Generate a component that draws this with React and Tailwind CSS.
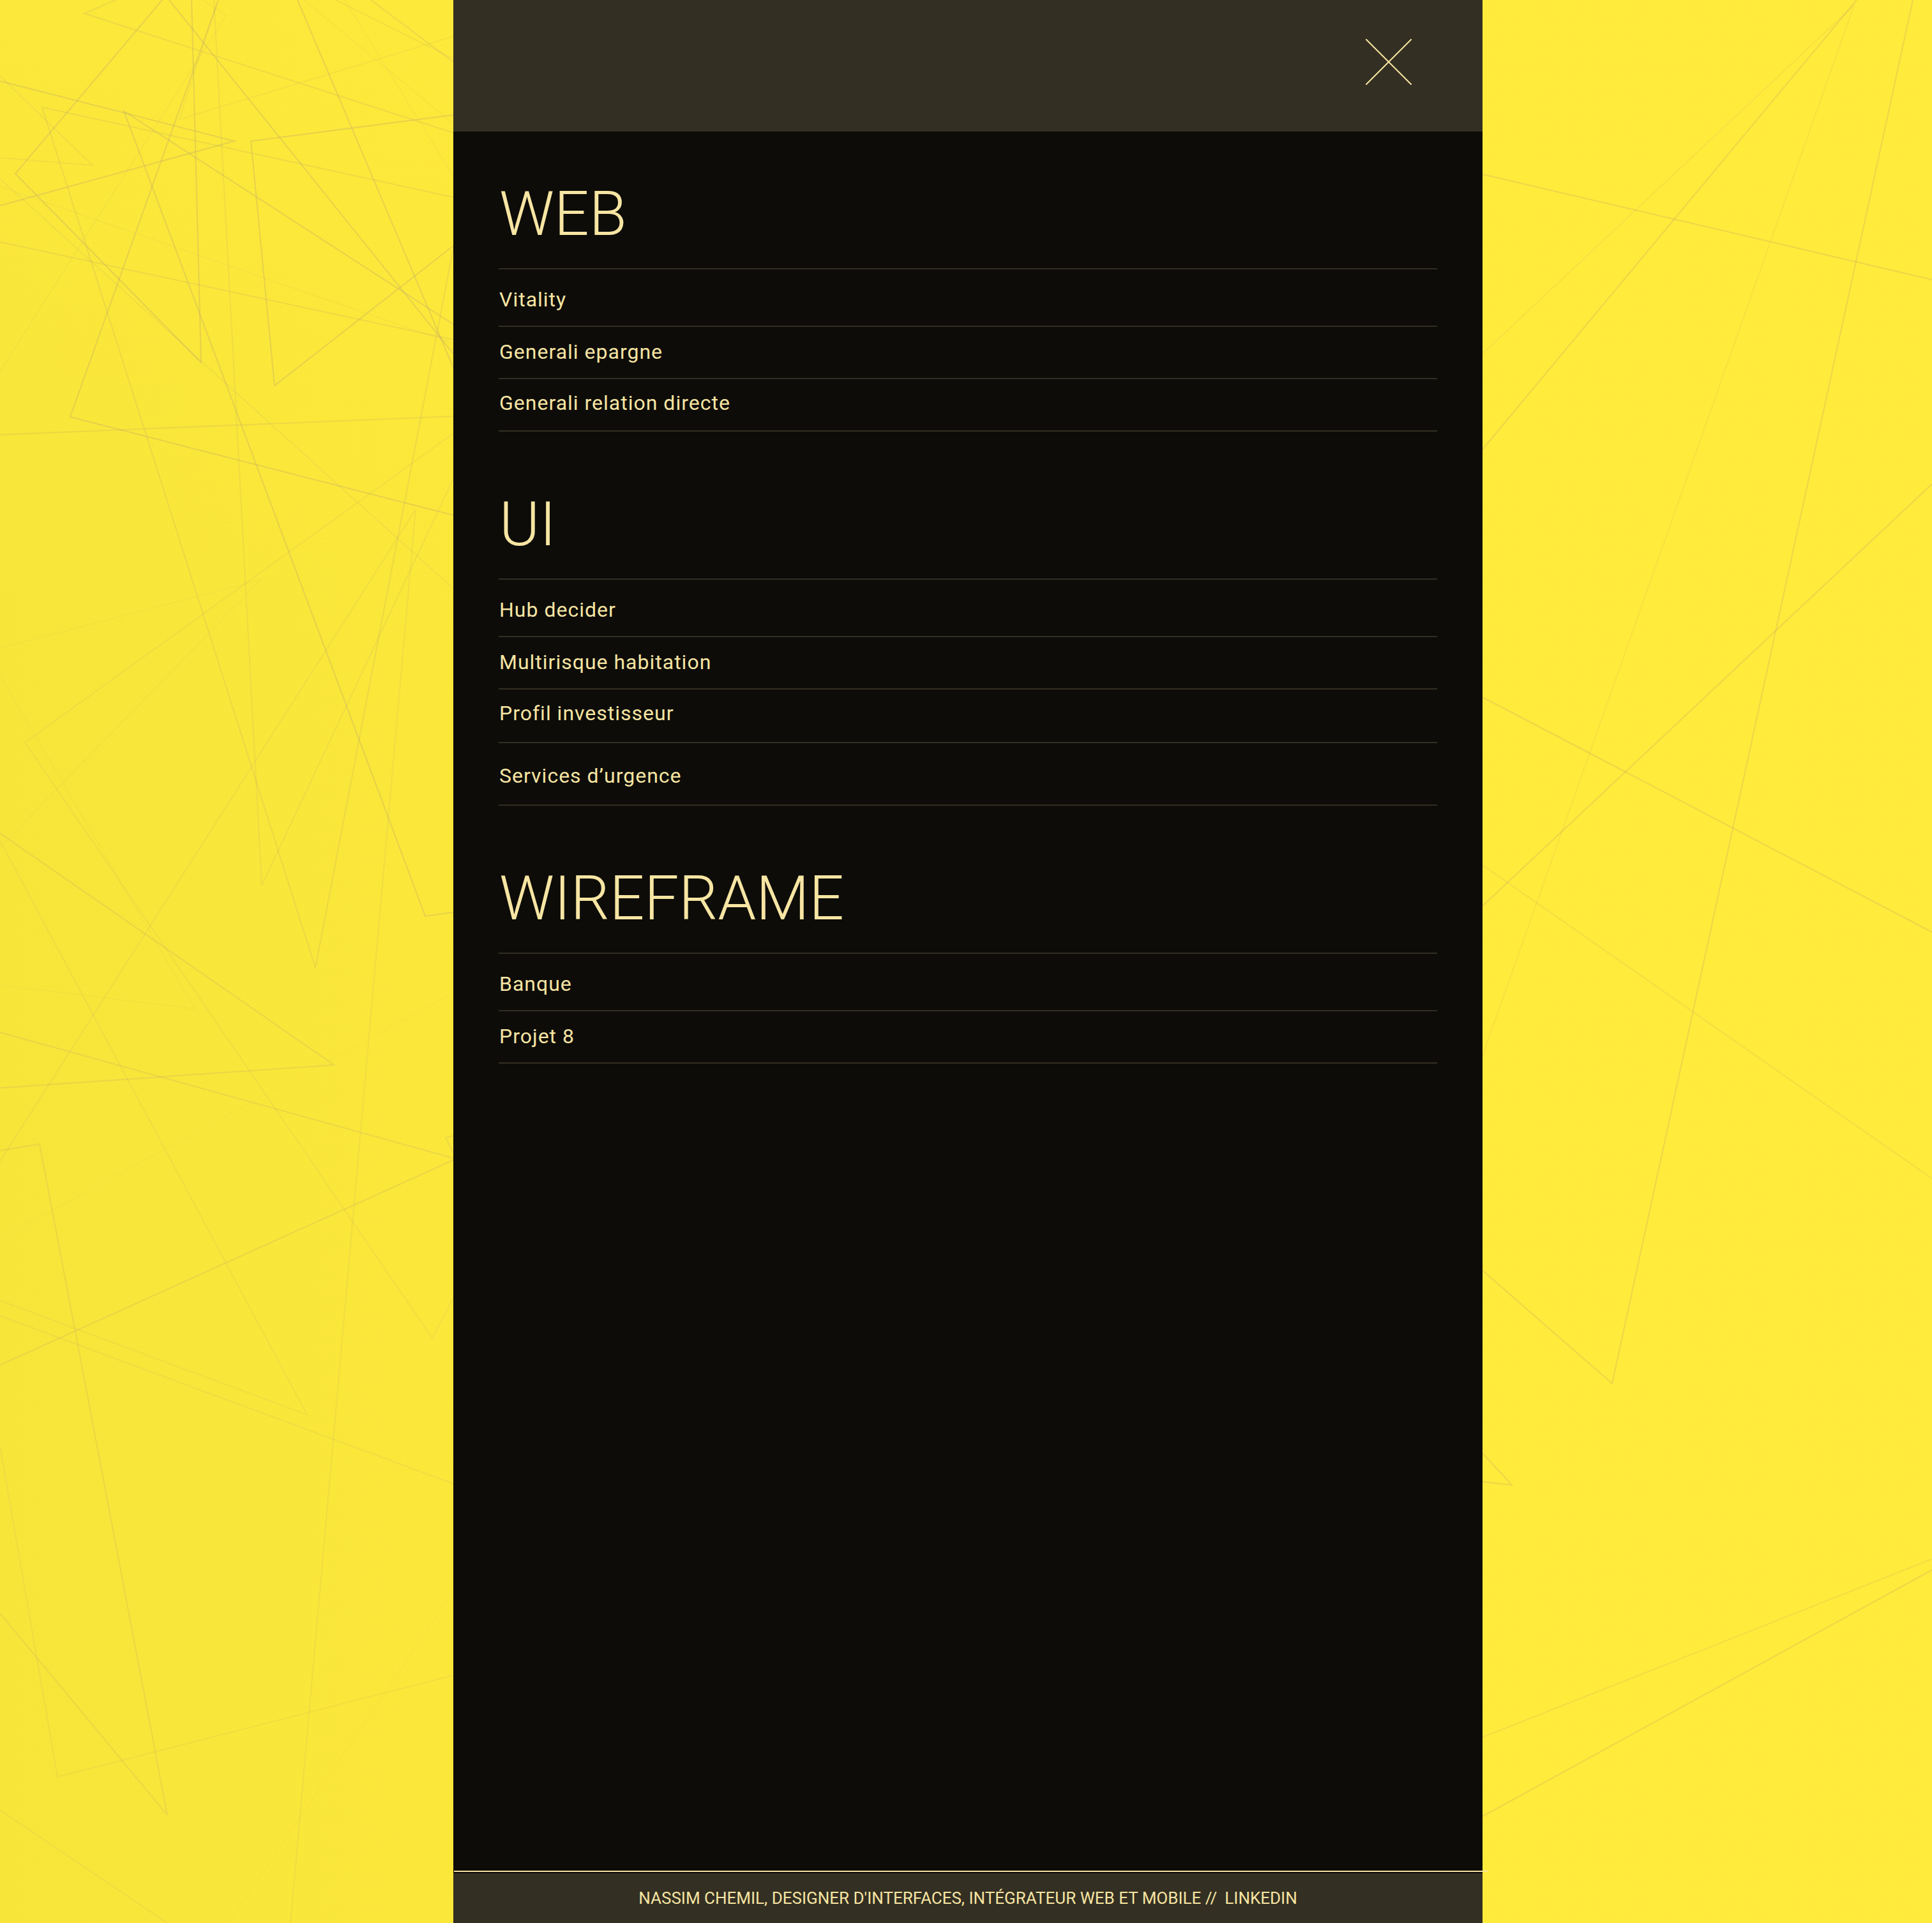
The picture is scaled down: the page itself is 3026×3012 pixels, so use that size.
const STRANDS = [
  // left side
  ['M0 127 367 221 0 322', 0.3],
  ['M254 0 24 272 315 568 300 0', 0.3],
  ['M265 0 710 554', 0.3],
  ['M342 0 110 653 710 807', 0.3],
  ['M710 508 194 174 666 1435 710 1429', 0.3],
  ['M466 0 710 576', 0.3],
  ['M710 180 393 221 430 604 710 385', 0.3],
  ['M181 0 132 21 710 208', 0.2],
  ['M581 0 710 97', 0.22],
  ['M526 0 710 92', 0.14],
  ['M710 309 66 168 494 1516 710 388', 0.2],
  ['M0 681 710 652', 0.2],
  ['M0 379 710 532', 0.2],
  ['M335 0 410 1387 710 750', 0.15],
  ['M0 119 145 259 0 247', 0.14],
  ['M0 280 519 750 710 922', 0.12],
  ['M0 292 710 538', 0.07],
  ['M0 582 354 24 317 0', 0.08],
  ['M340 5 281 187 710 57', 0.1],
  ['M476 0 710 194', 0.07],
  ['M540 0 710 276', 0.07],
  ['M710 679 39 1163 677 2096 710 2033', 0.12],
  ['M0 1015 409 908 0 1327', 0.05],
  ['M0 1819 651 798 455 3012', 0.14],
  ['M0 1058 305 1580 0 1543', 0.05],
  ['M0 1305 523 1668 0 1704', 0.22],
  ['M0 1317 481 2216 0 2037', 0.12],
  ['M0 1617 710 1814', 0.22],
  ['M710 1817 0 2138', 0.22],
  ['M0 1802 62 1792 262 2843 0 2527', 0.2],
  ['M0 2061 710 2324', 0.14],
  ['M0 2265 90 2783 710 2624', 0.12],
  ['M0 2835 262 3012', 0.13],
  ['M710 1779 698 1782 710 1806', 0.2],
  ['M0 1940 710 1555', 0.03],
  ['M710 2493 358 3012', 0.03],
  // right side
  ['M2322 273 3026 438', 0.27],
  ['M2908 0 2322 704', 0.27],
  ['M2996 0 2525 2167 2322 1990', 0.27],
  ['M2322 554 2904 8 2322 1654', 0.12],
  ['M3026 758 2322 1419', 0.27],
  ['M2322 1092 3026 1460', 0.27],
  ['M2322 1355 3026 1846', 0.18],
  ['M2322 2276 2368 2326 2322 2321', 0.27],
  ['M2322 2721 3026 2442', 0.18],
  ['M2322 2845 3026 2459', 0.27],
];

const FIRST = 'pt-6 pb-4.5';
const NORMAL = 'pt-4 pb-4.5';
const THIRD = 'pt-3.5 pb-5';

const SECTIONS = [
  {
    title: 'WEB',
    items: [
      ['Vitality', FIRST],
      ['Generali epargne', NORMAL],
      ['Generali relation directe', THIRD],
    ],
  },
  {
    title: 'UI',
    items: [
      ['Hub decider', FIRST],
      ['Multirisque habitation', NORMAL],
      ['Profil investisseur', 'pt-3.5 pb-5.5'],
      ['Services d’urgence', 'pt-7 pb-5.5'],
    ],
  },
  {
    title: 'WIREFRAME',
    items: [
      ['Banque', FIRST],
      ['Projet 8', NORMAL],
    ],
  },
];

function Backdrop() {
  return (
    <svg
      className="absolute inset-0 h-full w-full"
      viewBox="0 0 3026 3012"
      preserveAspectRatio="xMidYMid slice"
      fill="none"
      stroke="#b8a070"
      strokeWidth="2"
      aria-hidden="true"
    >
      {STRANDS.map(([d, opacity]) => (
        <path key={d} d={d} strokeOpacity={opacity} />
      ))}
    </svg>
  );
}

function MenuSection({ title, items }) {
  return (
    <section>
      <h2 className="pb-9 pl-px text-8xl leading-[98px] font-light">{title}</h2>
      <ul className="border-b-2 border-[#332e22]">
        {items.map(([label, padding]) => (
          <li key={label} className="border-t-2 border-[#332e22]">
            <a href="#" className={`block pl-px text-[32px] leading-[46px] tracking-[1px] ${padding}`}>
              {label}
            </a>
          </li>
        ))}
      </ul>
    </section>
  );
}

export default function App() {
  return (
    <div className="relative min-h-screen overflow-hidden bg-[#ffeb3b] bg-linear-to-r from-[#f7e53a] via-[#ffeb3b] via-55% to-[#ffeb3b] pl-1.5 font-['Roboto',sans-serif] text-[#f7e5a3]">
      <div className="absolute inset-0 bg-linear-to-b from-[#ffeb3b]/50 to-[#ffeb3b]/0 to-35%" />
      <Backdrop />
      <div className="relative mx-auto flex min-h-screen w-full max-w-[1612px] flex-col bg-[#0d0c08]">
        <header className="flex h-[206px] items-start justify-end bg-[#332f22] pt-[61px] pr-[111px]">
          <button type="button" aria-label="Fermer le menu" className="cursor-pointer">
            <svg className="block size-18" viewBox="0 0 72 72" fill="none" stroke="currentColor" strokeWidth="2">
              <path d="M0 0 72 72M72 0 0 72" />
            </svg>
          </button>
        </header>
        <nav className="flex grow flex-col gap-24 px-[71px] pt-20 pb-24">
          {SECTIONS.map((section) => (
            <MenuSection key={section.title} {...section} />
          ))}
        </nav>
        <div className="mb-0.5 ml-px -mr-2 h-0.5 bg-[#f7e5a3]" />
        <footer className="flex h-[78px] items-center justify-center gap-3 bg-[#332f22] text-[26px] leading-8">
          <p>NASSIM CHEMIL, DESIGNER D'INTERFACES, INTÉGRATEUR WEB ET MOBILE //</p>
          <a href="#">LINKEDIN</a>
        </footer>
      </div>
    </div>
  );
}
